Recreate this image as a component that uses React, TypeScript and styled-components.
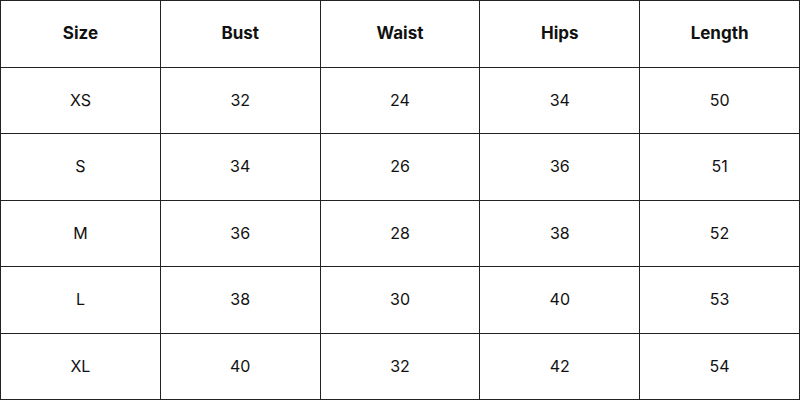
import React from 'react'
import styled, { createGlobalStyle } from 'styled-components'

const GlobalStyle = createGlobalStyle`
  html, body {
    margin: 0;
    padding: 0;
    background: #fff;
  }
  body {
    font-family: Inter, "Open Sans", sans-serif;
    color: #111;
  }
`

const Table = styled.table`
  width: 800px;
  height: 400px;
  border-collapse: collapse;
  table-layout: fixed;
  border: 1px solid #222;
`

const Cell = styled.td<{ $head?: boolean }>`
  border: 1px solid #222;
  padding: 0 0 1px;
  text-align: center;
  vertical-align: middle;
  font-size: ${(p) => (p.$head ? '17px' : '16px')};
  font-weight: ${(p) => (p.$head ? 700 : 400)};
  color: #111;
`

const headers = ['Size', 'Bust', 'Waist', 'Hips', 'Length']

const rows = [
  ['XS', '32', '24', '34', '50'],
  ['S', '34', '26', '36', '51'],
  ['M', '36', '28', '38', '52'],
  ['L', '38', '30', '40', '53'],
  ['XL', '40', '32', '42', '54'],
]

export default function App() {
  return (
    <>
      <GlobalStyle />
      <Table>
        <tbody>
          <tr>
            {headers.map((h) => (
              <Cell key={h} $head>
                {h}
              </Cell>
            ))}
          </tr>
          {rows.map((r) => (
            <tr key={r[0]}>
              {r.map((v, i) => (
                <Cell key={i}>{v}</Cell>
              ))}
            </tr>
          ))}
        </tbody>
      </Table>
    </>
  )
}
